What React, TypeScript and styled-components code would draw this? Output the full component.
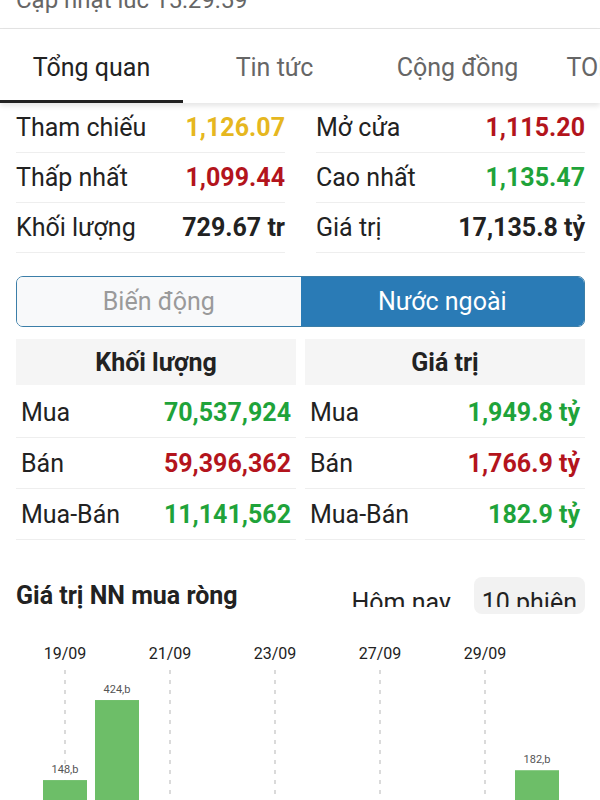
import React, { useState } from "react";
import styled, { createGlobalStyle } from "styled-components";

const GlobalStyle = createGlobalStyle`
  html, body {
    margin: 0;
    padding: 0;
    background: #ffffff;
    width: 600px;
    height: 800px;
    overflow: hidden;
  }
  body {
    font-family: Roboto, "Noto Sans", "Liberation Sans", sans-serif;
    color: #222222;
  }
  * {
    box-sizing: border-box;
  }
`;

const Page = styled.div`
  width: 600px;
`;

const UpdateBar = styled.div`
  height: 29px;
  overflow: hidden;
  border-bottom: 1px solid #e4e4e4;
  padding-left: 16px;
`;

const UpdateText = styled.div`
  margin-top: -14px;
  font-size: 24px;
  line-height: 28px;
  color: #666666;
  white-space: nowrap;
`;

const TabBar = styled.nav`
  display: flex;
  height: 74px;
  overflow: hidden;
  background: #ffffff;
  box-shadow: 0 3px 5px rgba(0, 0, 0, 0.1);
  position: relative;
  z-index: 1;
`;

const Tab = styled.div<{ $active?: boolean }>`
  flex: none;
  width: 183px;
  display: flex;
  align-items: center;
  justify-content: center;
  padding-top: 6px;
  font-size: 25px;
  color: ${(p) => (p.$active ? "#222222" : "#666666")};
  border-bottom: 3px solid ${(p) => (p.$active ? "#222222" : "transparent")};
  white-space: nowrap;
`;

const StatsGrid = styled.section`
  display: grid;
  grid-template-columns: 269px 269px;
  column-gap: 31px;
  padding: 0 15px 0 16px;
`;

const StatRow = styled.div`
  display: flex;
  justify-content: space-between;
  align-items: center;
  height: 50px;
  border-bottom: 1px solid #eeeeee;
  font-size: 25px;
  white-space: nowrap;
`;

const Label = styled.span`
  color: #222222;
`;

const Value = styled.span<{ $color: string }>`
  font-weight: 700;
  color: ${(p) => p.$color};
`;

const Segmented = styled.div`
  display: flex;
  height: 51px;
  margin: 23px 15px 0 16px;
  border: 1px solid #3b7ea8;
  border-radius: 7px;
  overflow: hidden;
`;

const Segment = styled.div<{ $active?: boolean }>`
  flex: 1;
  display: flex;
  align-items: center;
  justify-content: center;
  font-size: 25px;
  background: ${(p) => (p.$active ? "#2a7bb6" : "#f8f9fa")};
  color: ${(p) => (p.$active ? "#ffffff" : "#9a9a9a")};
`;

const Foreign = styled.section`
  display: grid;
  grid-template-columns: 280px 280px;
  column-gap: 9px;
  padding: 0 15px 0 16px;
  margin-top: 12px;
`;

const Column = styled.div`
  display: flex;
  flex-direction: column;
`;

const ColumnHead = styled.div`
  height: 46px;
  display: flex;
  align-items: center;
  justify-content: center;
  background: #f5f5f5;
  font-size: 25px;
  font-weight: 700;
  color: #222222;
  margin-bottom: 2px;
`;

const ForeignRow = styled.div`
  display: flex;
  justify-content: space-between;
  align-items: center;
  height: 51px;
  padding: 0 5px;
  border-bottom: 1px solid #eeeeee;
  font-size: 25px;
  white-space: nowrap;
`;

const ChartHeader = styled.div`
  display: flex;
  justify-content: space-between;
  align-items: center;
  margin-top: 37px;
  padding: 0 15px 0 16px;
  height: 37px;
`;

const ChartTitle = styled.h3`
  margin: 0;
  font-size: 25px;
  font-weight: 700;
  color: #222222;
`;

const Periods = styled.div`
  display: flex;
  gap: 15px;
  height: 37px;
`;

const Period = styled.div<{ $active?: boolean }>`
  height: 37px;
  padding: 0 8px;
  border-radius: 8px;
  background: ${(p) => (p.$active ? "#f2f2f2" : "transparent")};
`;

const PeriodText = styled.span`
  display: block;
  height: 30px;
  padding-top: 11px;
  overflow: hidden;
  font-size: 25px;
  line-height: 30px;
  color: #222222;
  white-space: nowrap;
`;

const ChartBox = styled.div`
  margin-top: 17px;
  height: 200px;
`;

const Red = "#b3141c";
const Green = "#1fa33a";
const Yellow = "#e6b720";
const Dark = "#222222";

const stats = [
  { label: "Tham chiếu", value: "1,126.07", color: Yellow },
  { label: "Mở cửa", value: "1,115.20", color: Red },
  { label: "Thấp nhất", value: "1,099.44", color: Red },
  { label: "Cao nhất", value: "1,135.47", color: Green },
  { label: "Khối lượng", value: "729.67 tr", color: Dark },
  { label: "Giá trị", value: "17,135.8 tỷ", color: Dark },
];

const volume = [
  { label: "Mua", value: "70,537,924", color: Green },
  { label: "Bán", value: "59,396,362", color: Red },
  { label: "Mua-Bán", value: "11,141,562", color: Green },
];

const amount = [
  { label: "Mua", value: "1,949.8 tỷ", color: Green },
  { label: "Bán", value: "1,766.9 tỷ", color: Red },
  { label: "Mua-Bán", value: "182.9 tỷ", color: Green },
];

const dates = [
  { x: 65, label: "19/09" },
  { x: 170, label: "21/09" },
  { x: 275, label: "23/09" },
  { x: 380, label: "27/09" },
  { x: 485, label: "29/09" },
];

const bars = [
  { x: 43, value: 148 },
  { x: 95, value: 424 },
  { x: 515, value: 182 },
];

function NetChart() {
  const base = 192;
  const scale = 0.29;
  return (
    <svg width="600" height="200" viewBox="0 0 600 200">
      {dates.map((d) => (
        <g key={d.label}>
          <text
            x={d.x}
            y={28}
            textAnchor="middle"
            fontSize="16"
            fill="#222"
            fontFamily="Roboto, sans-serif"
          >
            {d.label}
          </text>
          <line
            x1={d.x}
            x2={d.x}
            y1={39}
            y2={200}
            stroke="#b5b5b5"
            strokeWidth="1"
            strokeDasharray="4 6"
          />
        </g>
      ))}
      {bars.map((b) => {
        const h = b.value * scale;
        return (
          <g key={b.x}>
            <rect x={b.x} y={base - h} width={44} height={h + 10} fill="#6dbe68" />
            <text
              x={b.x + 22}
              y={base - h - 7}
              textAnchor="middle"
              fontSize="11"
              fill="#555"
              fontFamily="Roboto, sans-serif"
            >
              {b.value},b
            </text>
          </g>
        );
      })}
    </svg>
  );
}

export default function App() {
  const [tab, setTab] = useState(0);
  const [mode, setMode] = useState(1);
  const [period, setPeriod] = useState(1);
  const tabs = ["Tổng quan", "Tin tức", "Cộng đồng", "TOP cổ phiếu"];

  return (
    <Page>
      <GlobalStyle />
      <UpdateBar>
        <UpdateText>Cập nhật lúc 15:29:59</UpdateText>
      </UpdateBar>
      <TabBar>
        {tabs.map((t, i) => (
          <Tab key={t} $active={tab === i} onClick={() => setTab(i)}>
            {t}
          </Tab>
        ))}
      </TabBar>
      <StatsGrid>
        {stats.map((s) => (
          <StatRow key={s.label}>
            <Label>{s.label}</Label>
            <Value $color={s.color}>{s.value}</Value>
          </StatRow>
        ))}
      </StatsGrid>
      <Segmented>
        <Segment $active={mode === 0} onClick={() => setMode(0)}>
          Biến động
        </Segment>
        <Segment $active={mode === 1} onClick={() => setMode(1)}>
          Nước ngoài
        </Segment>
      </Segmented>
      <Foreign>
        <Column>
          <ColumnHead>Khối lượng</ColumnHead>
          {volume.map((r) => (
            <ForeignRow key={r.label}>
              <Label>{r.label}</Label>
              <Value $color={r.color}>{r.value}</Value>
            </ForeignRow>
          ))}
        </Column>
        <Column>
          <ColumnHead>Giá trị</ColumnHead>
          {amount.map((r) => (
            <ForeignRow key={r.label}>
              <Label>{r.label}</Label>
              <Value $color={r.color}>{r.value}</Value>
            </ForeignRow>
          ))}
        </Column>
      </Foreign>
      <ChartHeader>
        <ChartTitle>Giá trị NN mua ròng</ChartTitle>
        <Periods>
          <Period $active={period === 0} onClick={() => setPeriod(0)}>
            <PeriodText>Hôm nay</PeriodText>
          </Period>
          <Period $active={period === 1} onClick={() => setPeriod(1)}>
            <PeriodText>10 phiên</PeriodText>
          </Period>
        </Periods>
      </ChartHeader>
      <ChartBox>
        <NetChart />
      </ChartBox>
    </Page>
  );
}
